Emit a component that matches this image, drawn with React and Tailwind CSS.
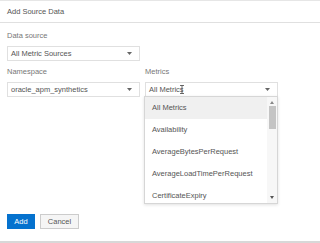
const metricOptions = [
  "All Metrics",
  "Availability",
  "AverageBytesPerRequest",
  "AverageLoadTimePerRequest",
  "CertificateExpiry",
];

const Caret = () => (
  <svg width="5" height="3" viewBox="0 0 5 3" className="shrink-0">
    <path d="M0 0 L5 0 L2.5 3 Z" fill="#666" />
  </svg>
);

const SelectBox = ({ value, children }) => (
  <div className="flex h-[15px] items-center justify-between border border-[#e0e0e0] bg-white pl-[3px] pr-[7px] text-[#555]">
    <span className="relative flex items-center">
      {value}
      {children}
    </span>
    <Caret />
  </div>
);

const Field = ({ label, children }) => (
  <div className="flex flex-col">
    <label className="mb-[5px] leading-[10px] text-[#777]">{label}</label>
    {children}
  </div>
);

export default function App() {
  return (
    <div
      className="relative h-[243px] w-[320px] overflow-hidden border-t border-[#e6e6e6] bg-white text-[7.5px] leading-[10px]"
      style={{ fontFamily: '"Liberation Sans", Arial, sans-serif' }}
    >
      <header className="flex h-[22px] items-center border-b border-[#e0e0e0] px-[7px] text-[#555]">
        Add Source Data
      </header>

      <div className="px-[7px] pt-[8px]">
        <div className="w-[133px]">
          <Field label="Data source">
            <SelectBox value="All Metric Sources" />
          </Field>
        </div>

        <div className="mt-[6px] grid grid-cols-[133px_133px] gap-x-[5px]">
          <Field label="Namespace">
            <SelectBox value="oracle_apm_synthetics" />
          </Field>
          <div className="relative">
            <Field label="Metrics">
              <SelectBox value="All Metrics">
                <svg width="4" height="9" viewBox="0 0 4 9" className="absolute left-[31px] top-[0px]">
                  <path d="M0 0.5 H4 M2 0.5 V8.5 M0 8.5 H4" stroke="#444" strokeWidth="0.8" fill="none" />
                </svg>
              </SelectBox>
            </Field>
            <div className="absolute left-[-1px] top-[29px] z-10 h-[108px] w-[134px] overflow-hidden border border-[#d6d6d6] bg-white shadow-[0_1px_3px_rgba(0,0,0,0.12)]">
              <ul className="pr-[10px]">
                {metricOptions.map((option, index) => (
                  <li
                    key={option}
                    className={`flex h-[22px] items-center pl-[7px] text-[#555] ${
                      index === 0 ? "bg-[#f0f0f0]" : ""
                    }`}
                  >
                    {option}
                  </li>
                ))}
              </ul>
              <div className="absolute right-0 top-0 flex h-full w-[10px] flex-col items-center bg-[#f7f7f7]">
                <svg width="4" height="3" viewBox="0 0 4 3" className="mt-[4px]">
                  <path d="M0 3 L4 3 L2 0 Z" fill="#888" />
                </svg>
                <div className="mt-[2px] h-[23px] w-[7px] bg-[#c4c4c4]" />
                <div className="flex-1" />
                <svg width="4" height="3" viewBox="0 0 4 3" className="mb-[4px]">
                  <path d="M0 0 L4 0 L2 3 Z" fill="#555" />
                </svg>
              </div>
            </div>
          </div>
        </div>
      </div>

      <div className="absolute bottom-[14px] left-[7px] flex gap-[5px]">
        <button className="flex h-[15px] w-[28px] items-center justify-center bg-[#0572ce] text-white">
          Add
        </button>
        <button className="flex h-[15px] w-[39px] items-center justify-center border border-[#cccccc] bg-[#f5f5f5] text-[#555]">
          Cancel
        </button>
      </div>
      <div className="absolute bottom-0 left-0 h-[2px] w-full bg-[#d8d8d8]" />
    </div>
  );
}
